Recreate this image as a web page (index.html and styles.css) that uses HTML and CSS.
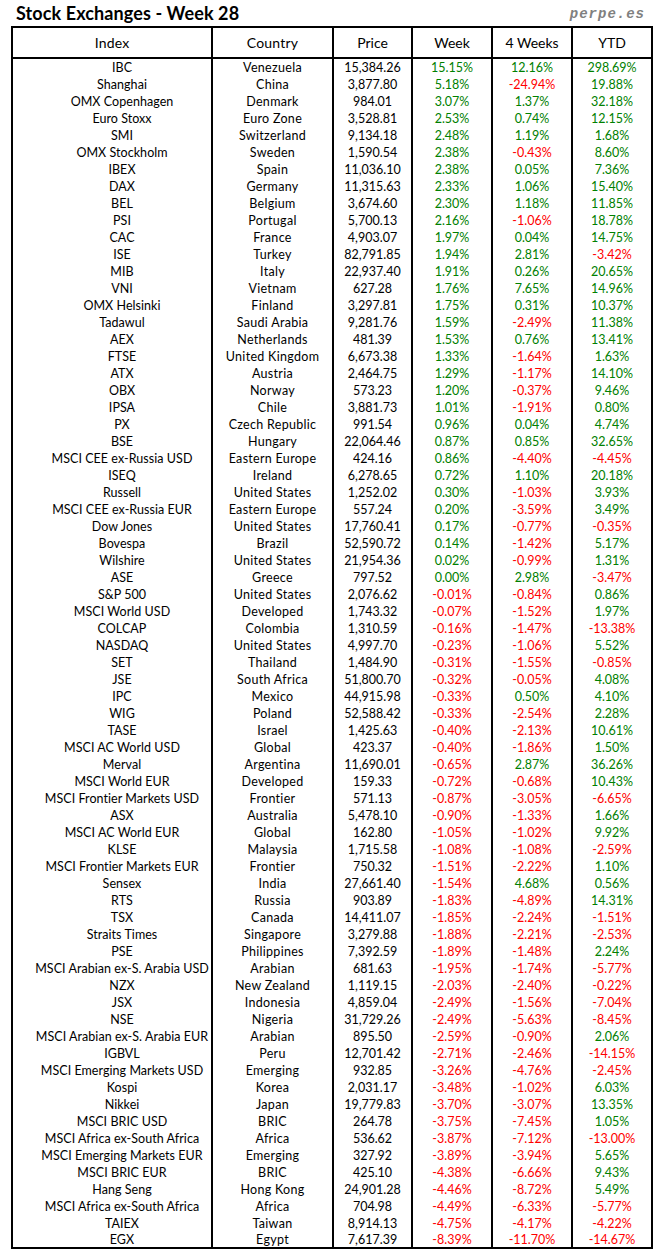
FILE: index.html
```html
<!DOCTYPE html>
<html>
<head>
<meta charset="utf-8">
<title>Stock Exchanges - Week 28</title>
<link rel="stylesheet" href="styles.css">
</head>
<body>
<div class="page">
  <div class="top">
    <h1 class="title">Stock Exchanges - Week 28</h1>
    <span class="brand">perpe.es</span>
  </div>
  <div class="table">
    <div class="row head">
      <div class="c">Index</div><div class="c">Country</div><div class="c">Price</div><div class="c">Week</div><div class="c">4 Weeks</div><div class="c">YTD</div>
    </div>
    <div class="body">
      <div class="row"><div class="c">IBC</div><div class="c">Venezuela</div><div class="c">15,384.26</div><div class="c g">15.15%</div><div class="c g">12.16%</div><div class="c g">298.69%</div></div>
      <div class="row"><div class="c">Shanghai</div><div class="c">China</div><div class="c">3,877.80</div><div class="c g">5.18%</div><div class="c r">-24.94%</div><div class="c g">19.88%</div></div>
      <div class="row"><div class="c">OMX Copenhagen</div><div class="c">Denmark</div><div class="c">984.01</div><div class="c g">3.07%</div><div class="c g">1.37%</div><div class="c g">32.18%</div></div>
      <div class="row"><div class="c">Euro Stoxx</div><div class="c">Euro Zone</div><div class="c">3,528.81</div><div class="c g">2.53%</div><div class="c g">0.74%</div><div class="c g">12.15%</div></div>
      <div class="row"><div class="c">SMI</div><div class="c">Switzerland</div><div class="c">9,134.18</div><div class="c g">2.48%</div><div class="c g">1.19%</div><div class="c g">1.68%</div></div>
      <div class="row"><div class="c">OMX Stockholm</div><div class="c">Sweden</div><div class="c">1,590.54</div><div class="c g">2.38%</div><div class="c r">-0.43%</div><div class="c g">8.60%</div></div>
      <div class="row"><div class="c">IBEX</div><div class="c">Spain</div><div class="c">11,036.10</div><div class="c g">2.38%</div><div class="c g">0.05%</div><div class="c g">7.36%</div></div>
      <div class="row"><div class="c">DAX</div><div class="c">Germany</div><div class="c">11,315.63</div><div class="c g">2.33%</div><div class="c g">1.06%</div><div class="c g">15.40%</div></div>
      <div class="row"><div class="c">BEL</div><div class="c">Belgium</div><div class="c">3,674.60</div><div class="c g">2.30%</div><div class="c g">1.18%</div><div class="c g">11.85%</div></div>
      <div class="row"><div class="c">PSI</div><div class="c">Portugal</div><div class="c">5,700.13</div><div class="c g">2.16%</div><div class="c r">-1.06%</div><div class="c g">18.78%</div></div>
      <div class="row"><div class="c">CAC</div><div class="c">France</div><div class="c">4,903.07</div><div class="c g">1.97%</div><div class="c g">0.04%</div><div class="c g">14.75%</div></div>
      <div class="row"><div class="c">ISE</div><div class="c">Turkey</div><div class="c">82,791.85</div><div class="c g">1.94%</div><div class="c g">2.81%</div><div class="c r">-3.42%</div></div>
      <div class="row"><div class="c">MIB</div><div class="c">Italy</div><div class="c">22,937.40</div><div class="c g">1.91%</div><div class="c g">0.26%</div><div class="c g">20.65%</div></div>
      <div class="row"><div class="c">VNI</div><div class="c">Vietnam</div><div class="c">627.28</div><div class="c g">1.76%</div><div class="c g">7.65%</div><div class="c g">14.96%</div></div>
      <div class="row"><div class="c">OMX Helsinki</div><div class="c">Finland</div><div class="c">3,297.81</div><div class="c g">1.75%</div><div class="c g">0.31%</div><div class="c g">10.37%</div></div>
      <div class="row"><div class="c">Tadawul</div><div class="c">Saudi Arabia</div><div class="c">9,281.76</div><div class="c g">1.59%</div><div class="c r">-2.49%</div><div class="c g">11.38%</div></div>
      <div class="row"><div class="c">AEX</div><div class="c">Netherlands</div><div class="c">481.39</div><div class="c g">1.53%</div><div class="c g">0.76%</div><div class="c g">13.41%</div></div>
      <div class="row"><div class="c">FTSE</div><div class="c">United Kingdom</div><div class="c">6,673.38</div><div class="c g">1.33%</div><div class="c r">-1.64%</div><div class="c g">1.63%</div></div>
      <div class="row"><div class="c">ATX</div><div class="c">Austria</div><div class="c">2,464.75</div><div class="c g">1.29%</div><div class="c r">-1.17%</div><div class="c g">14.10%</div></div>
      <div class="row"><div class="c">OBX</div><div class="c">Norway</div><div class="c">573.23</div><div class="c g">1.20%</div><div class="c r">-0.37%</div><div class="c g">9.46%</div></div>
      <div class="row"><div class="c">IPSA</div><div class="c">Chile</div><div class="c">3,881.73</div><div class="c g">1.01%</div><div class="c r">-1.91%</div><div class="c g">0.80%</div></div>
      <div class="row"><div class="c">PX</div><div class="c">Czech Republic</div><div class="c">991.54</div><div class="c g">0.96%</div><div class="c g">0.04%</div><div class="c g">4.74%</div></div>
      <div class="row"><div class="c">BSE</div><div class="c">Hungary</div><div class="c">22,064.46</div><div class="c g">0.87%</div><div class="c g">0.85%</div><div class="c g">32.65%</div></div>
      <div class="row"><div class="c">MSCI CEE ex-Russia USD</div><div class="c">Eastern Europe</div><div class="c">424.16</div><div class="c g">0.86%</div><div class="c r">-4.40%</div><div class="c r">-4.45%</div></div>
      <div class="row"><div class="c">ISEQ</div><div class="c">Ireland</div><div class="c">6,278.65</div><div class="c g">0.72%</div><div class="c g">1.10%</div><div class="c g">20.18%</div></div>
      <div class="row"><div class="c">Russell</div><div class="c">United States</div><div class="c">1,252.02</div><div class="c g">0.30%</div><div class="c r">-1.03%</div><div class="c g">3.93%</div></div>
      <div class="row"><div class="c">MSCI CEE ex-Russia EUR</div><div class="c">Eastern Europe</div><div class="c">557.24</div><div class="c g">0.20%</div><div class="c r">-3.59%</div><div class="c g">3.49%</div></div>
      <div class="row"><div class="c">Dow Jones</div><div class="c">United States</div><div class="c">17,760.41</div><div class="c g">0.17%</div><div class="c r">-0.77%</div><div class="c r">-0.35%</div></div>
      <div class="row"><div class="c">Bovespa</div><div class="c">Brazil</div><div class="c">52,590.72</div><div class="c g">0.14%</div><div class="c r">-1.42%</div><div class="c g">5.17%</div></div>
      <div class="row"><div class="c">Wilshire</div><div class="c">United States</div><div class="c">21,954.36</div><div class="c g">0.02%</div><div class="c r">-0.99%</div><div class="c g">1.31%</div></div>
      <div class="row"><div class="c">ASE</div><div class="c">Greece</div><div class="c">797.52</div><div class="c g">0.00%</div><div class="c g">2.98%</div><div class="c r">-3.47%</div></div>
      <div class="row"><div class="c">S&amp;P 500</div><div class="c">United States</div><div class="c">2,076.62</div><div class="c r">-0.01%</div><div class="c r">-0.84%</div><div class="c g">0.86%</div></div>
      <div class="row"><div class="c">MSCI World USD</div><div class="c">Developed</div><div class="c">1,743.32</div><div class="c r">-0.07%</div><div class="c r">-1.52%</div><div class="c g">1.97%</div></div>
      <div class="row"><div class="c">COLCAP</div><div class="c">Colombia</div><div class="c">1,310.59</div><div class="c r">-0.16%</div><div class="c r">-1.47%</div><div class="c r">-13.38%</div></div>
      <div class="row"><div class="c">NASDAQ</div><div class="c">United States</div><div class="c">4,997.70</div><div class="c r">-0.23%</div><div class="c r">-1.06%</div><div class="c g">5.52%</div></div>
      <div class="row"><div class="c">SET</div><div class="c">Thailand</div><div class="c">1,484.90</div><div class="c r">-0.31%</div><div class="c r">-1.55%</div><div class="c r">-0.85%</div></div>
      <div class="row"><div class="c">JSE</div><div class="c">South Africa</div><div class="c">51,800.70</div><div class="c r">-0.32%</div><div class="c r">-0.05%</div><div class="c g">4.08%</div></div>
      <div class="row"><div class="c">IPC</div><div class="c">Mexico</div><div class="c">44,915.98</div><div class="c r">-0.33%</div><div class="c g">0.50%</div><div class="c g">4.10%</div></div>
      <div class="row"><div class="c">WIG</div><div class="c">Poland</div><div class="c">52,588.42</div><div class="c r">-0.33%</div><div class="c r">-2.54%</div><div class="c g">2.28%</div></div>
      <div class="row"><div class="c">TASE</div><div class="c">Israel</div><div class="c">1,425.63</div><div class="c r">-0.40%</div><div class="c r">-2.13%</div><div class="c g">10.61%</div></div>
      <div class="row"><div class="c">MSCI AC World USD</div><div class="c">Global</div><div class="c">423.37</div><div class="c r">-0.40%</div><div class="c r">-1.86%</div><div class="c g">1.50%</div></div>
      <div class="row"><div class="c">Merval</div><div class="c">Argentina</div><div class="c">11,690.01</div><div class="c r">-0.65%</div><div class="c g">2.87%</div><div class="c g">36.26%</div></div>
      <div class="row"><div class="c">MSCI World EUR</div><div class="c">Developed</div><div class="c">159.33</div><div class="c r">-0.72%</div><div class="c r">-0.68%</div><div class="c g">10.43%</div></div>
      <div class="row"><div class="c">MSCI Frontier Markets USD</div><div class="c">Frontier</div><div class="c">571.13</div><div class="c r">-0.87%</div><div class="c r">-3.05%</div><div class="c r">-6.65%</div></div>
      <div class="row"><div class="c">ASX</div><div class="c">Australia</div><div class="c">5,478.10</div><div class="c r">-0.90%</div><div class="c r">-1.33%</div><div class="c g">1.66%</div></div>
      <div class="row"><div class="c">MSCI AC World EUR</div><div class="c">Global</div><div class="c">162.80</div><div class="c r">-1.05%</div><div class="c r">-1.02%</div><div class="c g">9.92%</div></div>
      <div class="row"><div class="c">KLSE</div><div class="c">Malaysia</div><div class="c">1,715.58</div><div class="c r">-1.08%</div><div class="c r">-1.08%</div><div class="c r">-2.59%</div></div>
      <div class="row"><div class="c">MSCI Frontier Markets EUR</div><div class="c">Frontier</div><div class="c">750.32</div><div class="c r">-1.51%</div><div class="c r">-2.22%</div><div class="c g">1.10%</div></div>
      <div class="row"><div class="c">Sensex</div><div class="c">India</div><div class="c">27,661.40</div><div class="c r">-1.54%</div><div class="c g">4.68%</div><div class="c g">0.56%</div></div>
      <div class="row"><div class="c">RTS</div><div class="c">Russia</div><div class="c">903.89</div><div class="c r">-1.83%</div><div class="c r">-4.89%</div><div class="c g">14.31%</div></div>
      <div class="row"><div class="c">TSX</div><div class="c">Canada</div><div class="c">14,411.07</div><div class="c r">-1.85%</div><div class="c r">-2.24%</div><div class="c r">-1.51%</div></div>
      <div class="row"><div class="c">Straits Times</div><div class="c">Singapore</div><div class="c">3,279.88</div><div class="c r">-1.88%</div><div class="c r">-2.21%</div><div class="c r">-2.53%</div></div>
      <div class="row"><div class="c">PSE</div><div class="c">Philippines</div><div class="c">7,392.59</div><div class="c r">-1.89%</div><div class="c r">-1.48%</div><div class="c g">2.24%</div></div>
      <div class="row"><div class="c">MSCI Arabian ex-S. Arabia USD</div><div class="c">Arabian</div><div class="c">681.63</div><div class="c r">-1.95%</div><div class="c r">-1.74%</div><div class="c r">-5.77%</div></div>
      <div class="row"><div class="c">NZX</div><div class="c">New Zealand</div><div class="c">1,119.15</div><div class="c r">-2.03%</div><div class="c r">-2.40%</div><div class="c r">-0.22%</div></div>
      <div class="row"><div class="c">JSX</div><div class="c">Indonesia</div><div class="c">4,859.04</div><div class="c r">-2.49%</div><div class="c r">-1.56%</div><div class="c r">-7.04%</div></div>
      <div class="row"><div class="c">NSE</div><div class="c">Nigeria</div><div class="c">31,729.26</div><div class="c r">-2.49%</div><div class="c r">-5.63%</div><div class="c r">-8.45%</div></div>
      <div class="row"><div class="c">MSCI Arabian ex-S. Arabia EUR</div><div class="c">Arabian</div><div class="c">895.50</div><div class="c r">-2.59%</div><div class="c r">-0.90%</div><div class="c g">2.06%</div></div>
      <div class="row"><div class="c">IGBVL</div><div class="c">Peru</div><div class="c">12,701.42</div><div class="c r">-2.71%</div><div class="c r">-2.46%</div><div class="c r">-14.15%</div></div>
      <div class="row"><div class="c">MSCI Emerging Markets USD</div><div class="c">Emerging</div><div class="c">932.85</div><div class="c r">-3.26%</div><div class="c r">-4.76%</div><div class="c r">-2.45%</div></div>
      <div class="row"><div class="c">Kospi</div><div class="c">Korea</div><div class="c">2,031.17</div><div class="c r">-3.48%</div><div class="c r">-1.02%</div><div class="c g">6.03%</div></div>
      <div class="row"><div class="c">Nikkei</div><div class="c">Japan</div><div class="c">19,779.83</div><div class="c r">-3.70%</div><div class="c r">-3.07%</div><div class="c g">13.35%</div></div>
      <div class="row"><div class="c">MSCI BRIC USD</div><div class="c">BRIC</div><div class="c">264.78</div><div class="c r">-3.75%</div><div class="c r">-7.45%</div><div class="c g">1.05%</div></div>
      <div class="row"><div class="c">MSCI Africa ex-South Africa</div><div class="c">Africa</div><div class="c">536.62</div><div class="c r">-3.87%</div><div class="c r">-7.12%</div><div class="c r">-13.00%</div></div>
      <div class="row"><div class="c">MSCI Emerging Markets EUR</div><div class="c">Emerging</div><div class="c">327.92</div><div class="c r">-3.89%</div><div class="c r">-3.94%</div><div class="c g">5.65%</div></div>
      <div class="row"><div class="c">MSCI BRIC EUR</div><div class="c">BRIC</div><div class="c">425.10</div><div class="c r">-4.38%</div><div class="c r">-6.66%</div><div class="c g">9.43%</div></div>
      <div class="row"><div class="c">Hang Seng</div><div class="c">Hong Kong</div><div class="c">24,901.28</div><div class="c r">-4.46%</div><div class="c r">-8.72%</div><div class="c g">5.49%</div></div>
      <div class="row"><div class="c">MSCI Africa ex-South Africa</div><div class="c">Africa</div><div class="c">704.98</div><div class="c r">-4.49%</div><div class="c r">-6.33%</div><div class="c r">-5.77%</div></div>
      <div class="row"><div class="c">TAIEX</div><div class="c">Taiwan</div><div class="c">8,914.13</div><div class="c r">-4.75%</div><div class="c r">-4.17%</div><div class="c r">-4.22%</div></div>
      <div class="row"><div class="c">EGX</div><div class="c">Egypt</div><div class="c">7,617.39</div><div class="c r">-8.39%</div><div class="c r">-11.70%</div><div class="c r">-14.67%</div></div>
    </div>
  </div>
</div>
</body>
</html>
```
FILE: styles.css
```css
* { box-sizing: border-box; }
html, body { margin: 0; padding: 0; background: #fff; }
body { font-family: Lato, "Open Sans", sans-serif; color: #000; }

.page { width: 664px; }

.top {
  display: flex;
  justify-content: space-between;
  align-items: flex-end;
  height: 26px;
  padding: 0 19px 3px 16px;
}
.title {
  margin: 0;
  font-family: Lato, sans-serif;
  font-weight: bold;
  font-size: 18px;
  letter-spacing: 0.1px;
  line-height: 20px;
}
.brand {
  font-family: "Liberation Mono", monospace;
  font-weight: bold;
  font-style: italic;
  font-size: 14px;
  letter-spacing: 1px;
  line-height: 18px;
  color: #808080;
}

.table {
  margin-left: 11px;
  width: 642px;
  border: 2px solid #000;
}
.row {
  display: grid;
  grid-template-columns: 198px 121px 79px 80px 80px 80px;
  height: 17px;
}
.row .c {
  text-align: center;
  font-size: 12.5px;
  line-height: 17px;
  white-space: nowrap;
}
.row .c:nth-child(-n+2) { letter-spacing: 0.3px; }
.row .c + .c { border-left: 2px solid #000; }

.body .row .c:first-child {
  padding-left: 20px;
  letter-spacing: 0.05px;
}

.head {
  height: 31px;
  border-bottom: 2px solid #000;
}
.head .c { font-size: 14px; line-height: 29px; }
.head .c:nth-child(-n+2) { letter-spacing: 0.2px; }

.body {
  height: 1188px;
}
.body .row:last-child { height: 15px; }
.body .row:last-child .c { line-height: 16px; }

.g { color: #008000; }
.r { color: #ff0000; }
```
